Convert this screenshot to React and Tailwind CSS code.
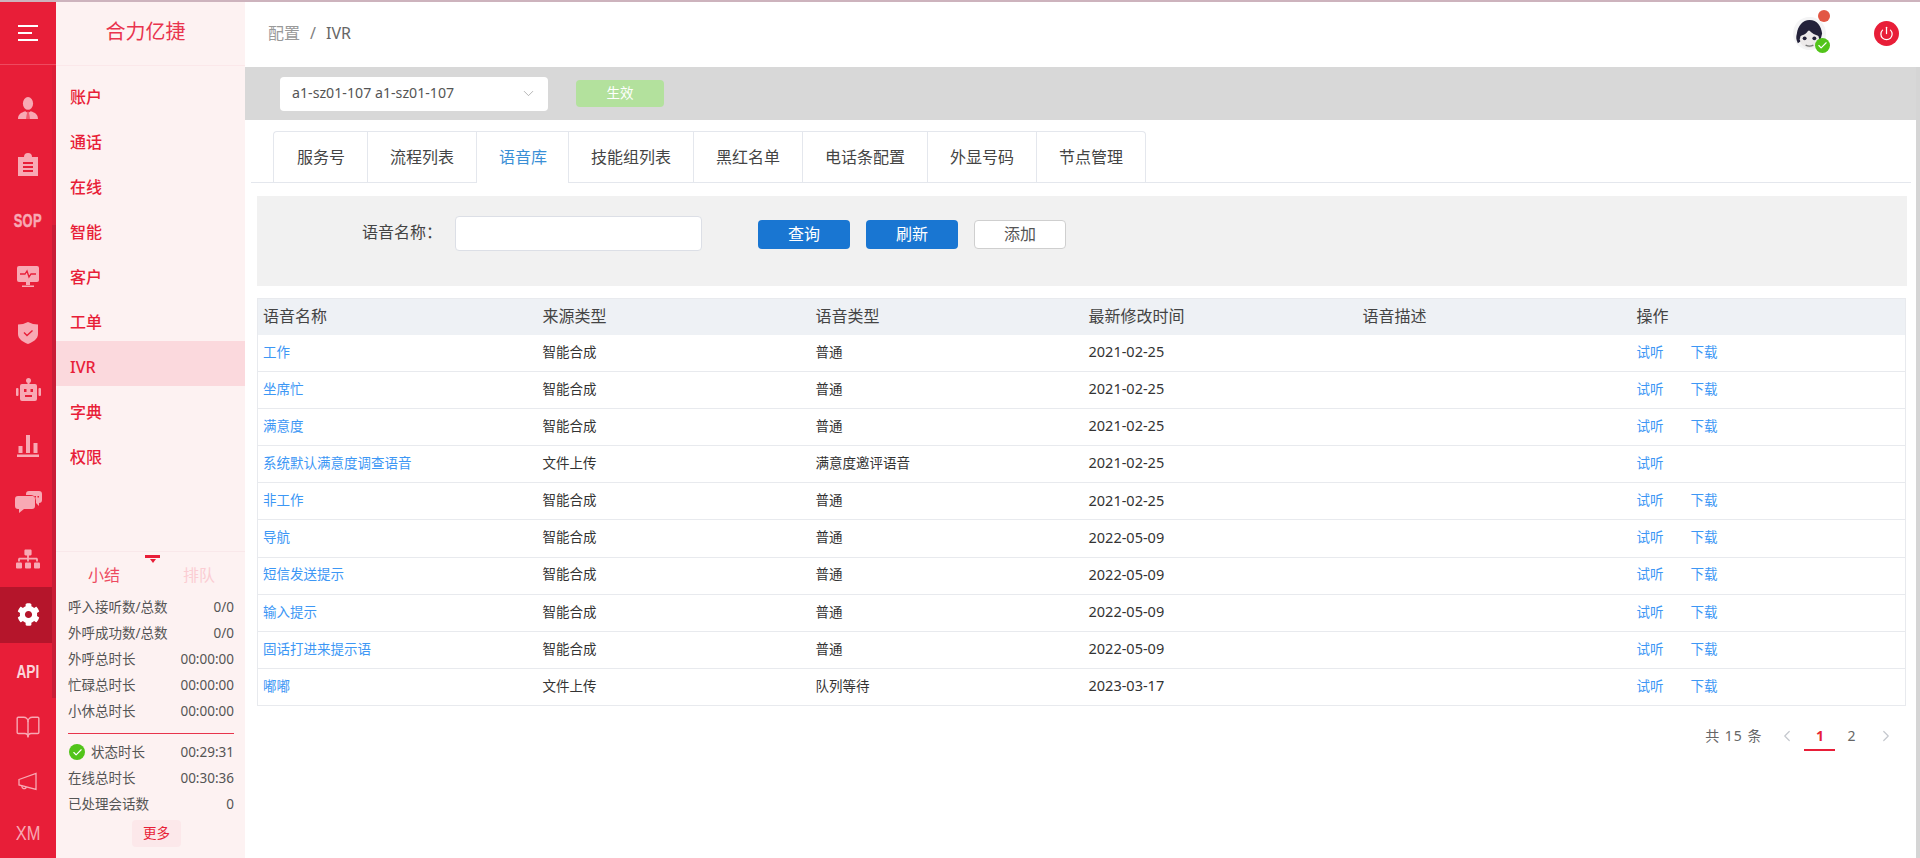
import React from 'react';
import { BookOpen, Power, Check, ChevronDown, ChevronLeft, ChevronRight } from 'lucide-react';
import { FaCog, FaSitemap } from 'react-icons/fa';

// 左側圖示
const UserIcon = () => (
  <svg width="20" height="22" viewBox="0 0 22 24" fill="currentColor">
    <ellipse cx="11" cy="7" rx="5.600" ry="7" />
    <path d="M0 24c0-5 3-7 8-8.500l2 1.500-1 7zM22 24c0-5-3-7-8-8.500l-2 1.500 1 7z" />
    <path d="M10 16h2l1 8h-4z" opacity="0.45" />
  </svg>
);
const ClipboardIcon = () => (
  <svg width="20" height="23" viewBox="0 0 20 23" fill="currentColor">
    <path fillRule="evenodd" d="M0 4h6a4 4 0 0 1 8 0h6v19H0zM5 9v2h10V9zM5 13v2h10v-2zM5 17v2h10v-2z" />
  </svg>
);
const MonitorIcon = () => (
  <svg width="22" height="22" viewBox="0 0 22 22" fill="currentColor">
    <rect x="0" y="0" width="22" height="16" rx="2" />
    <rect x="9" y="16" width="4" height="3" />
    <rect x="5" y="19.500" width="12" height="1.500" />
    <path d="M3 8h5l2-3 2 6 2-3h5" fill="none" stroke="#e81e38" strokeWidth="1.300" />
  </svg>
);
const ShieldIcon = () => (
  <svg width="20" height="22" viewBox="0 0 20 22" fill="currentColor">
    <path d="M0 2.500 5 2 10 0l5 2 5 .500V12c0 5-5 8-10 10C5 20 0 17 0 12z" />
    <path d="M6 10.500 9 13.500 14.500 8.500" fill="none" stroke="#e81e38" strokeWidth="1.400" />
  </svg>
);
const RobotIcon = () => (
  <svg width="25" height="23" viewBox="0 0 25 23" fill="currentColor">
    <circle cx="12.500" cy="2.500" r="2.500" />
    <rect x="11.500" y="3" width="2" height="4" />
    <path fillRule="evenodd" d="M6 6h13a2 2 0 0 1 2 2v13a2 2 0 0 1-2 2H6a2 2 0 0 1-2-2V8a2 2 0 0 1 2-2zM8 11v3h2.500v-3zM14.500 11v3H17v-3zM9 17v2h7v-2z" />
    <rect x="0" y="10" width="2.500" height="8" rx="1" />
    <rect x="22.500" y="10" width="2.500" height="8" rx="1" />
  </svg>
);
const BarsIcon = () => (
  <svg width="22" height="22" viewBox="0 0 22 22" fill="currentColor">
    <rect x="1.500" y="11" width="4" height="7" />
    <rect x="9" y="0" width="4" height="18" />
    <rect x="16.500" y="8" width="4" height="10" />
    <rect x="0" y="19.500" width="22" height="2.500" />
  </svg>
);
const ChatIcon = () => (
  <svg width="27" height="22" viewBox="0 0 27 22" fill="currentColor">
    <path d="M3 5h14a3 3 0 0 1 3 3v7a3 3 0 0 1-3 3h-8l-5 4v-4H3a3 3 0 0 1-3-3V8a3 3 0 0 1 3-3z" />
    <path fillRule="evenodd" d="M14 0h10a3 3 0 0 1 3 3v6a3 3 0 0 1-3 3v3l-3-3v-2c0-3-2-6-5-6h-5V3a3 3 0 0 1 3-3zM16.500 5v1.500H18V5zM19.500 5v1.500H21V5zM22.500 5v1.500H24V5z" />
  </svg>
);
const MegaIcon = () => (
  <svg width="20" height="20" viewBox="0 0 20 20" fill="none" stroke="currentColor" strokeWidth="1.300">
    <path d="M1 7.500 18 1.500V17.500L1 13z" />
    <path d="M4 14a2.200 2.200 0 0 0 4.300 1" />
  </svg>
);

const railItems = [
  { key: 'user', el: <UserIcon /> },
  { key: 'clip', el: <ClipboardIcon /> },
  { key: 'sop', el: <span className="font-['Liberation_Sans'] font-bold text-[19px] leading-none scale-x-[0.68] tracking-[0.5px] [-webkit-text-stroke:0.5px_currentColor]">SOP</span> },
  { key: 'monitor', el: <MonitorIcon /> },
  { key: 'shield', el: <ShieldIcon /> },
  { key: 'robot', el: <RobotIcon /> },
  { key: 'bars', el: <BarsIcon /> },
  { key: 'chat', el: <ChatIcon /> },
  { key: 'org', el: <FaSitemap size={24} /> },
  { key: 'gear', el: <FaCog size={23} />, active: true },
  { key: 'api', el: <span className="font-['Liberation_Sans'] font-bold text-[19px] leading-none scale-x-[0.72] text-[#fbd3d9]">API</span> },
  { key: 'book', el: <BookOpen size={26} strokeWidth={1.3} /> },
  { key: 'mega', el: <MegaIcon />, h: 'h-[52px]' },
  { key: 'xm', el: <span className="font-['Liberation_Sans'] text-[20px] leading-none scale-x-[0.82]">XM</span>, h: 'h-[50px]' },
];

const navItems = ['账户', '通话', '在线', '智能', '客户', '工单', 'IVR', '字典', '权限'];
const tabs = ['服务号', '流程列表', '语音库', '技能组列表', '黑红名单', '电话条配置', '外显号码', '节点管理'];

const rows = [
  ['工作', '智能合成', '普通', '2021-02-25', true],
  ['坐席忙', '智能合成', '普通', '2021-02-25', true],
  ['满意度', '智能合成', '普通', '2021-02-25', true],
  ['系统默认满意度调查语音', '文件上传', '满意度邀评语音', '2021-02-25', false],
  ['非工作', '智能合成', '普通', '2021-02-25', true],
  ['导航', '智能合成', '普通', '2022-05-09', true],
  ['短信发送提示', '智能合成', '普通', '2022-05-09', true],
  ['输入提示', '智能合成', '普通', '2022-05-09', true],
  ['固话打进来提示语', '智能合成', '普通', '2022-05-09', true],
  ['嘟嘟', '文件上传', '队列等待', '2023-03-17', true],
];

const stats1 = [
  ['呼入接听数/总数', '0/0'],
  ['外呼成功数/总数', '0/0'],
  ['外呼总时长', '00:00:00'],
  ['忙碌总时长', '00:00:00'],
  ['小休总时长', '00:00:00'],
];

const Rail = () => (
  <div className="relative w-14 shrink-0 flex flex-col bg-[#e81e38] text-[#f8a9b4]">
    <div className="h-[63px] shrink-0 border-b border-[#ee4a5f] flex items-center justify-center">
      <div className="w-5 flex flex-col gap-[5px]">
        <div className="h-[2px] w-5 bg-white" />
        <div className="h-[2px] w-[14px] bg-white" />
        <div className="h-[2px] w-5 bg-white" />
      </div>
    </div>
    <div className="pt-[15px] flex flex-col">
      {railItems.map((it) => (
        <div
          key={it.key}
          className={`flex items-center justify-center ${it.h || 'h-[56.300px]'} ${it.active ? 'bg-[#b5152b] text-white w-[52px] pl-[4px]' : ''}`}
        >
          {it.el}
        </div>
      ))}
    </div>
    {/* 滾動條 */}
    <div className="absolute right-0 top-[64px] w-1 h-[160px] bg-[#dc1f38]" />
    <div className="absolute right-0 top-[223px] w-1 h-[473px] bg-[#c91d36]" />
  </div>
);

const Panel = () => (
  <div className="w-[189px] shrink-0 flex flex-col bg-[#fdf2f2]">
    <div className="h-[64px] shrink-0 border-b border-[#fbe8ea] flex items-center justify-center pb-[3px] pr-[10px] text-[20px] text-[#e9344e]">
      合力亿捷
    </div>
    <div className="flex-1 pt-[5px]">
      {navItems.map((n) => (
        <div
          key={n}
          className={`h-[45px] flex items-center pl-[14px] pt-[6px] text-[16px] font-medium text-[#e81e38] ${n === 'IVR' ? 'bg-[#fbd9dd]' : ''}`}
        >
          {n}
        </div>
      ))}
    </div>
    <div className="h-[307px] shrink-0 border-t border-[#f9e8ea] flex flex-col">
      <div className="flex justify-center pt-[3px] translate-x-[2px]">
        <div className="flex flex-col items-center">
          <div className="w-[15px] h-[3px] bg-[#e81e38]" />
          <div className="w-0 h-0 border-l-[3px] border-r-[3px] border-t-[4px] border-l-transparent border-r-transparent border-t-[#e81e38] mt-[1px]" />
        </div>
      </div>
      <div className="h-[30px] -mt-[3px] flex text-[16px] leading-[30px]">
        <div className="ml-[32px] text-[#ed4a60]">小结</div>
        <div className="ml-[63px] text-[#fbcdd3]">排队</div>
      </div>
      <div className="mt-[4px] pl-[12px] pr-[11px] text-[13.500px] text-[#555]">
        {stats1.map(([k, v]) => (
          <div key={k} className="h-[26px] flex items-center justify-between">
            <span>{k}</span>
            <span>{v}</span>
          </div>
        ))}
        <div className="h-px bg-[#e8344c] mt-[9px] mb-[5px]" />
        <div className="h-[26px] flex items-center justify-between">
          <span className="flex items-center gap-[6px]">
            <span className="w-4 h-4 ml-px rounded-full bg-[#52c41a] flex items-center justify-center text-white">
              <Check size={11} strokeWidth={2.5} />
            </span>
            状态时长
          </span>
          <span>00:29:31</span>
        </div>
        <div className="h-[26px] flex items-center justify-between">
          <span>在线总时长</span>
          <span>00:30:36</span>
        </div>
        <div className="h-[26px] flex items-center justify-between">
          <span>已处理会话数</span>
          <span>0</span>
        </div>
      </div>
      <div className="flex justify-center mt-[3px] pl-[12px]">
        <div className="w-[49px] h-[27px] rounded bg-[#fce8ea] text-[#e81e38] text-[13.500px] flex items-center justify-center">
          更多
        </div>
      </div>
    </div>
  </div>
);

const Avatar = () => (
  <svg width="33" height="33" viewBox="0 0 34 34">
    <circle cx="17" cy="17" r="17" fill="#f4f4f5" />
    <path d="M5 27c-2-4-2-6-1-10C5 9 10 3 17 3c8 0 12 6 13 14l-2 8H8z" fill="#24223a" />
    <ellipse cx="17" cy="23" rx="10" ry="9" fill="#ece9e9" />
    <path d="M6 20c5-1 9-3 10-7 3 4 7 6 12 7v-8H6z" fill="#24223a" />
    <circle cx="12" cy="22" r="2" fill="#24223a" />
    <circle cx="22" cy="22" r="2" fill="#24223a" />
    <path d="M13 29q4 2 8 0" stroke="#777" strokeWidth="1.500" fill="none" />
  </svg>
);

const Header = () => (
  <div className="h-[65px] shrink-0 bg-white flex items-center pl-[23px] pr-[21px] text-[16px]">
    <span className="text-[#999] pb-[3px]">配置</span>
    <span className="mx-[10px] text-[#808080] pb-[3px]">/</span>
    <span className="text-[#666] pb-[3px]">IVR</span>
    <div className="ml-auto relative w-[33px] h-[33px] mr-[48px] -mt-[2px]">
      <Avatar />
      <span className="absolute -top-[7px] right-[-4px] w-3 h-3 rounded-full bg-[#e25744]" />
      <span className="absolute bottom-[-3px] right-[-4px] w-[15px] h-[15px] rounded-full bg-[#52c41a] flex items-center justify-center text-white">
        <Check size={11} strokeWidth={2.5} />
      </span>
    </div>
    <span className="w-[25px] h-[25px] rounded-full bg-[#e81e38] flex items-center justify-center text-white -mt-[2px]">
      <Power size={15} strokeWidth={2} />
    </span>
  </div>
);

const Table = () => (
  <table className="mt-3 ml-3 w-[1648px] table-fixed border-collapse border border-[#e8eaee] text-[13.500px] text-[#333]">
    <colgroup>
      <col className="w-[280px]" />
      <col className="w-[273px]" />
      <col className="w-[273px]" />
      <col className="w-[274px]" />
      <col className="w-[274px]" />
      <col className="w-[274px]" />
    </colgroup>
    <thead>
      <tr className="h-[36px] bg-[#eef1f5] text-[16px] text-[#444]">
        {['语音名称', '来源类型', '语音类型', '最新修改时间', '语音描述', '操作'].map((h) => (
          <th key={h} className="font-normal text-left px-[5px] pb-[2px]">{h}</th>
        ))}
      </tr>
    </thead>
    <tbody>
      {rows.map(([name, src, type, date, dl]) => (
        <tr key={name} className="h-[37.100px] border-b border-[#e8eaee]">
          <td className="px-[5px] pb-[2px] text-[#3d97f5]">{name}</td>
          <td className="px-[5px] pb-[2px]">{src}</td>
          <td className="px-[5px] pb-[2px]">{type}</td>
          <td className="px-[5px] pb-[2px] text-[14.500px]">{date}</td>
          <td className="px-[5px]" />
          <td className="px-[5px] pb-[2px] text-[#3d97f5]">
            <span>试听</span>
            {dl && <span className="ml-[27px]">下载</span>}
          </td>
        </tr>
      ))}
    </tbody>
  </table>
);

export default function App() {
  return (
    <div className="w-[1920px] h-[858px] overflow-hidden flex flex-col bg-white font-['Noto_Sans','Noto_Sans_CJK_SC',sans-serif]">
      <div className="h-[2px] shrink-0 bg-[#cdb3bd]" />
      <div className="flex-1 flex min-h-0">
        <Rail />
        <Panel />
        <div className="flex-1 flex flex-col min-w-0">
          <Header />
          <div className="flex-1 flex min-h-0">
            <div className="flex-1 min-w-0">
              {/* 頂部灰條 */}
              <div className="h-[53px] bg-[#d8d8d8] flex items-center pl-[35px]">
                <div className="w-[268px] h-[34px] bg-white rounded flex items-center justify-between pl-3 pr-[11px] text-[14.200px] text-[#555]">
                  <span className="pb-[2px]">a1-sz01-107 a1-sz01-107</span>
                  <ChevronDown size={17} strokeWidth={1} className="text-[#999]" />
                </div>
                <div className="ml-[28px] w-[88px] h-[27px] rounded bg-[#b3e19d] text-white text-[13.500px] flex items-center justify-center">
                  生效
                </div>
              </div>
              {/* 頁籤 */}
              <div className="mt-[11px] ml-[6px] mr-[5px] pl-[22px] flex border-b border-[#e4e7ed] h-[52px]">
                {tabs.map((t, i) => (
                  <div
                    key={t}
                    className={`pb-[2px] h-[52px] flex items-center text-[16px] border-t border-l border-[#e4e7ed] ${i === 0 ? 'pl-[23px] pr-[22px] rounded-tl' : 'px-[22px]'} ${i === 2 ? 'text-[#3a8fd6] bg-white !pr-[21px]' : 'text-[#444]'} ${i === tabs.length - 1 ? 'border-r rounded-tr' : ''}`}
                  >
                    {t}
                  </div>
                ))}
              </div>
              {/* 查詢 */}
              <div className="mt-[13px] ml-3 mr-[9px] h-[90px] bg-[#f1f1f1] flex items-start pt-[20px] pl-[105px]">
                <span className="w-[93px] text-[16px] leading-[32px] text-[#444]">语音名称：</span>
                <div className="w-[247px] h-[35px] bg-white border border-[#dcdfe6] rounded" />
                <div className="ml-[56px] mt-[4px] w-[92px] h-[29px] rounded bg-[#1976d2] text-white text-[16px] pb-[2px] flex items-center justify-center">查询</div>
                <div className="ml-4 mt-[4px] w-[92px] h-[29px] rounded bg-[#1976d2] text-white text-[16px] pb-[2px] flex items-center justify-center">刷新</div>
                <div className="ml-4 mt-[4px] w-[92px] h-[29px] rounded bg-white border border-[#cfcfcf] text-[#555] text-[16px] pb-[2px] flex items-center justify-center">添加</div>
              </div>
              <Table />
              {/* 分頁 */}
              <div className="mt-[19px] flex justify-end pr-[21.500px] h-[26px] text-[14px] text-[#666]">
                <span className="tracking-[1px] leading-[22px]">共 15 条</span>
                <ChevronLeft size={18} strokeWidth={1.6} className="ml-[16px] mt-[2px] text-[#c5c8ce]" />
                <span className="ml-[8px] w-[31px] h-[26px] text-center leading-[22px] font-bold text-[#e81e38] border-b-2 border-[#e81e38]">1</span>
                <span className="ml-[12px] leading-[22px]">2</span>
                <ChevronRight size={18} strokeWidth={1.6} className="ml-[21px] mt-[2px] text-[#c5c8ce]" />
              </div>
            </div>
            <div className="w-1 shrink-0 bg-[#d5d5d5]" />
          </div>
        </div>
      </div>
    </div>
  );
}
